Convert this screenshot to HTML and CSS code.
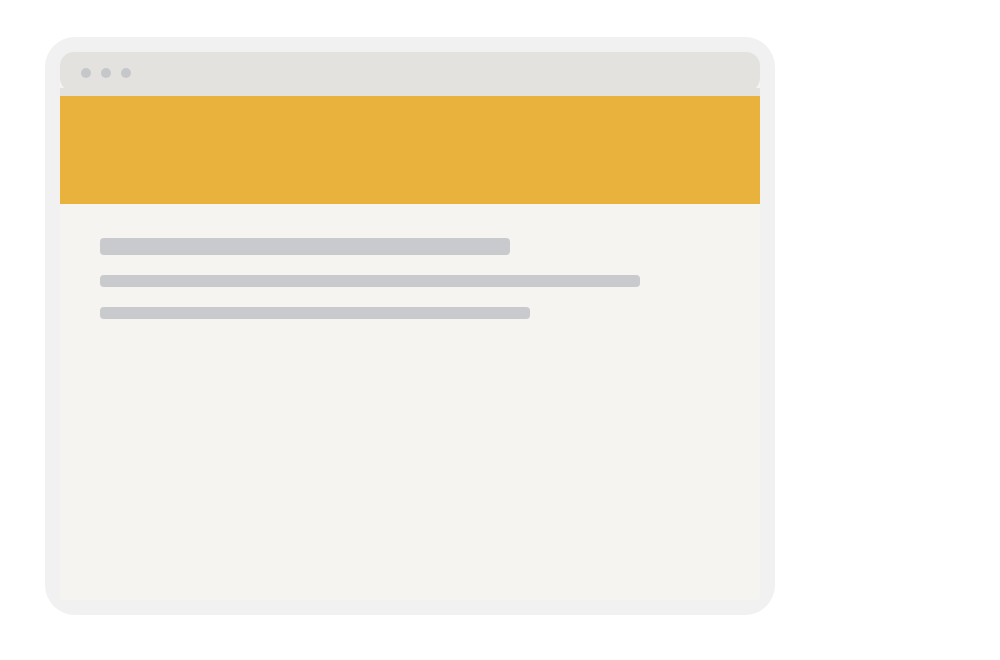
FILE: index.html
```html
<!DOCTYPE html>
<html lang="en">
<head>
<meta charset="utf-8">
<title>Window mockup</title>
<link rel="stylesheet" href="styles.css">
</head>
<body>
<div class="frame">
  <div class="window">
    <div class="titlebar">
      <span class="dot"></span>
      <span class="dot"></span>
      <span class="dot"></span>
    </div>
    <div class="titlebar-strip"></div>
    <div class="banner"></div>
    <div class="content">
      <div class="line line-title"></div>
      <div class="line line-long"></div>
      <div class="line line-mid"></div>
    </div>
  </div>
</div>
</body>
</html>
```
FILE: styles.css
```css
html, body {
  margin: 0;
  padding: 0;
  background: #ffffff;
  font-family: "Liberation Sans", Arial, sans-serif;
}
body {
  width: 1000px;
  height: 660px;
  overflow: hidden;
}
.frame {
  margin: 37px 0 0 45px;
  width: 730px;
  height: 578px;
  box-sizing: border-box;
  padding: 15px;
  background: #f0f1f0;
  border-radius: 30px;
}
.window {
  display: flex;
  flex-direction: column;
  width: 700px;
  height: 548px;
  background: #f5f4f1;
  border-radius: 14px 14px 3px 3px;
}
.titlebar {
  height: 40px;
  background: #e3e2df;
  border-radius: 14px;
  display: flex;
  align-items: center;
  gap: 10px;
  padding: 0 0 0 21px;
  box-sizing: border-box;
  position: relative;
  z-index: 1;
}
.titlebar-strip {
  height: 8px;
  margin-top: -4px;
  background: #e3e2df;
}
.dot {
  width: 10px;
  height: 10px;
  border-radius: 50%;
  background: #c6c7cb;
  margin-top: 2px;
}
.banner {
  height: 108px;
  background: #e8b23c;
}
.content {
  display: flex;
  flex-direction: column;
  padding: 34px 40px 0 40px;
}
.line {
  background: #c9cace;
  border-radius: 4px;
}
.line-title {
  width: 410px;
  height: 17px;
}
.line-long {
  width: 540px;
  height: 12px;
  margin-top: 20px;
}
.line-mid {
  width: 430px;
  height: 12px;
  margin-top: 20px;
}
```
